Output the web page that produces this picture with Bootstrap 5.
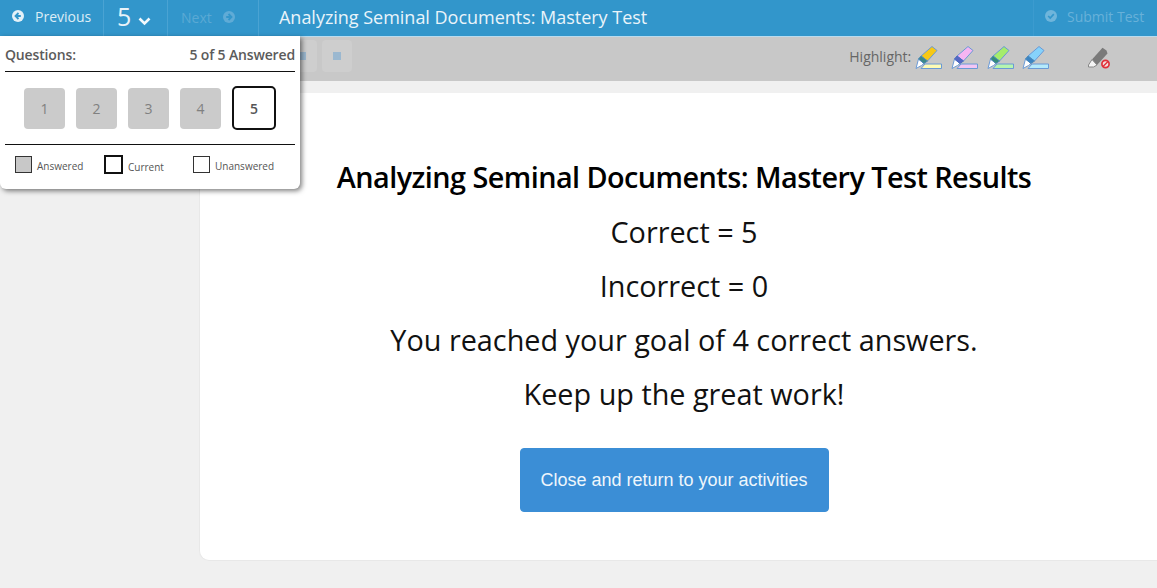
<!DOCTYPE html>
<html lang="en"><head><meta charset="utf-8"><title>Mastery Test</title>
<link rel="stylesheet" href="https://cdn.jsdelivr.net/npm/bootstrap@5.3.0/dist/css/bootstrap.min.css">
<style>
html,body{height:100%;overflow:hidden}
body{background:#f0f0f0;font-family:"Open Sans",sans-serif;color:#000;position:relative}
.topbar{height:36px;background:#3296cb;color:#fff}
.topitem{height:36px;border-right:1px solid #4aa3d3;display:flex;align-items:center}
.previtem{width:104px;padding-left:12px;font-size:14px;color:#dcedf6;gap:11px;padding-bottom:4px}
.numitem{width:64px;padding-left:13px;font-size:25px;color:#e8f3f9;gap:7px;padding-bottom:2px}
.nextitem{width:91px;padding-left:13px;font-size:14px;color:#5aa9d4;gap:11px;padding-bottom:2px}
.testtitle{padding-left:20px;font-size:18px;color:#eaf4fa;padding-bottom:2px;letter-spacing:-.02px}
.submititem{width:124px;border-left:1px solid #3c9bcf;font-size:14px;color:#68b1d9;padding-left:11px;gap:10px;display:flex;align-items:center;height:36px;padding-bottom:4px;white-space:nowrap}
.toolbar{height:45px;background:#c8c8c8;border-top:1px solid #b9dbee;color:#666;font-size:14px;padding-left:287px}
.toolbtn{width:30px;height:32px;background:#cecece;border-radius:4px;margin-right:5px;margin-bottom:6px;display:flex;align-items:center;justify-content:center}
.toolbtn i{display:block;width:8px;height:8px;background:#9bb8d0}
.hllabel{margin-left:auto;margin-right:4px;padding-bottom:5px}
.hlicon{width:27px;height:23px;display:block;margin-right:8.7px;margin-bottom:3px}
.eraser{width:24px;height:22px;margin-left:29px;margin-right:46px;margin-bottom:2px}
.strip{height:12px}
.workarea{padding-left:199px;height:468px}
.resultcard{height:468px;margin-right:-11px;background:#fff;border-left:1px solid #e8e8e8;border-bottom:1px solid #e8e8e8;border-bottom-left-radius:10px;padding-top:57px;text-align:center}
.resulthead{font-size:28.8px;font-weight:600;line-height:54px;letter-spacing:-.54px;margin:0 0 1px}
.resultline{font-size:28.8px;line-height:54px;margin:0;color:#111}
.closebtn{--bs-btn-bg:#3b8ed6;--bs-btn-border-color:#3b8ed6;--bs-btn-color:#eef6fc;--bs-btn-hover-bg:#3b8ed6;--bs-btn-hover-color:#eef6fc;--bs-btn-hover-border-color:#3b8ed6;width:309px;height:64px;margin-top:27px;margin-right:20px;font-family:"Liberation Sans",sans-serif;font-size:18px;border-radius:4px;padding:0}
.qpanel{position:absolute;left:0;top:36px;width:300px;height:153px;background:#fff;border-radius:0 0 6px 6px;box-shadow:2px 2px 5px rgba(0,0,0,.5);padding:0 5px;color:#555}
.qhead{height:36px;border-bottom:1px solid #111;font-size:14px;font-weight:600;letter-spacing:-.15px;color:#5b5b5b;padding-bottom:6px}
.qnums{height:73px;padding:0 0 0 19px;gap:11px;border-bottom:1px solid #111}
.qnum{width:41px;height:41px;background:#cbcbcb;border-radius:4px;color:#808080;font-size:14px;display:flex;align-items:center;justify-content:center}
.qnum.now{width:44px;height:44px;background:#fff;border:2px solid #111;border-radius:5px;color:#555;font-weight:600}
.qlegend{font-size:10px;color:#555;padding-left:10px;height:38px}
.swatch{width:17px;height:17px;border:1px solid #333;display:block}
.swatch.ans{background:#c8c8c8}
.swatch.cur{width:19px;height:19px;border:2px solid #111}
.legenditem{display:flex;align-items:flex-end;gap:5px;line-height:13px}
.slotans{width:89px}
.slotcur{width:89px}
</style></head>
<body>
<div class="topbar d-flex">
 <div class="topitem previtem"><svg width="12" height="12" viewBox="0 0 12 12"><circle cx="6" cy="6" r="6" fill="#e4f1f8"/><path d="M6.500 3 3.500 6l3 3M4 6h4.800" fill="none" stroke="#3296cb" stroke-width="1.8"/></svg><span>Previous</span></div>
 <div class="topitem numitem"><span>5</span><svg width="13" height="9" viewBox="0 0 13 9" class="mt-2"><path d="M1.500 1.500 6.500 6.500l5-5" fill="none" stroke="#f2f8fc" stroke-width="2.6"/></svg></div>
 <div class="topitem nextitem"><span>Next</span><svg width="12" height="12" viewBox="0 0 12 12"><circle cx="6" cy="6" r="6" fill="#5fabd6"/><path d="M5.500 3l3 3-3 3M8 6H3.200" fill="none" stroke="#3296cb" stroke-width="1.8"/></svg></div>
 <div class="testtitle d-flex align-items-center">Analyzing Seminal Documents: Mastery Test</div>
 <div class="submititem ms-auto"><svg width="12" height="12" viewBox="0 0 12 12"><circle cx="6" cy="6" r="6" fill="#6fb5db"/><path d="M3.200 6 5.200 8l3.600-3.800" fill="none" stroke="#3296cb" stroke-width="1.7"/></svg><span>Submit Test</span></div>
</div>
<div class="toolbar d-flex align-items-center">
 <div class="toolbtn"><i></i></div><div class="toolbtn"><i></i></div>
 <span class="hllabel">Highlight:</span>
 <svg class="hlicon" viewBox="0 0 27 23"><path d="M6 22.500h20.500v-4.500H10z" fill="#fdfbb5" stroke="#6a9ad6"/><path d="M3.500 13 9 17.500 6.500 19.500 1 22.500z" fill="#fff" stroke="#6a9ad6"/><path d="M17 .5 22 4.500 12.500 15 6 10z" fill="#f7c815" stroke="#6a9ad6"/><path d="M6 10 12.500 15 9 17.500 3.500 13z" fill="#3c8a86" stroke="#4d8ab8"/></svg>
 <svg class="hlicon" viewBox="0 0 27 23"><path d="M6 22.500h20.500v-4.500H10z" fill="#f2c6f5" stroke="#6a9ad6"/><path d="M3.500 13 9 17.500 6.500 19.500 1 22.500z" fill="#fff" stroke="#6a9ad6"/><path d="M17 .5 22 4.500 12.500 15 6 10z" fill="#f6b5f2" stroke="#6a9ad6"/><path d="M6 10 12.500 15 9 17.500 3.500 13z" fill="#5668c4" stroke="#4d6cc0"/></svg>
 <svg class="hlicon" viewBox="0 0 27 23"><path d="M6 22.500h20.500v-4.500H10z" fill="#b6f5b0" stroke="#6a9ad6"/><path d="M3.500 13 9 17.500 6.500 19.500 1 22.500z" fill="#fff" stroke="#6a9ad6"/><path d="M17 .5 22 4.500 12.500 15 6 10z" fill="#a5ec6c" stroke="#6a9ad6"/><path d="M6 10 12.500 15 9 17.500 3.500 13z" fill="#358d78" stroke="#4d8ab8"/></svg>
 <svg class="hlicon" viewBox="0 0 27 23"><path d="M6 22.500h20.500v-4.500H10z" fill="#b5eafc" stroke="#6a9ad6"/><path d="M3.500 13 9 17.500 6.500 19.500 1 22.500z" fill="#fff" stroke="#6a9ad6"/><path d="M17 .5 22 4.500 12.500 15 6 10z" fill="#86d2fb" stroke="#6a9ad6"/><path d="M6 10 12.500 15 9 17.500 3.500 13z" fill="#3b85c4" stroke="#4d8ab8"/></svg>
 <svg class="eraser" viewBox="0 0 24 22"><path d="M5 12.500 15.500 .8l4 2.700 1 3L10 18z" fill="#7a7a7a"/><path d="M5 12.500 10 18 6.500 20 1.500 20 1.500 18z" fill="#f4f4f4" stroke="#888"/><circle cx="18.500" cy="17" r="3.600" fill="#f5dede" stroke="#e0303a" stroke-width="1.700"/><path d="M16 19.500 21 14.500" stroke="#e0303a" stroke-width="1.500"/></svg>
</div>
<div class="strip"></div>
<div class="workarea">
 <div class="resultcard">
  <h1 class="resulthead">Analyzing Seminal Documents: Mastery Test Results</h1>
  <p class="resultline">Correct = 5</p>
  <p class="resultline">Incorrect = 0</p>
  <p class="resultline">You reached your goal of 4 correct answers.</p>
  <p class="resultline">Keep up the great work!</p>
  <button type="button" class="btn closebtn">Close and return to your activities</button>
 </div>
</div>
<div class="qpanel">
 <div class="qhead d-flex justify-content-between align-items-end"><span>Questions:</span><span>5 of 5 Answered</span></div>
 <div class="qnums d-flex align-items-center"><div class="qnum">1</div><div class="qnum">2</div><div class="qnum">3</div><div class="qnum">4</div><div class="qnum now">5</div></div>
 <div class="qlegend d-flex align-items-center">
  <div class="legenditem slotans"><span class="swatch ans"></span><span>Answered</span></div>
  <div class="legenditem slotcur"><span class="swatch cur"></span><span>Current</span></div>
  <div class="legenditem"><span class="swatch"></span><span>Unanswered</span></div>
 </div>
</div>
<script src="https://cdn.jsdelivr.net/npm/bootstrap@5.3.0/dist/js/bootstrap.bundle.min.js"></script>
</body></html>
